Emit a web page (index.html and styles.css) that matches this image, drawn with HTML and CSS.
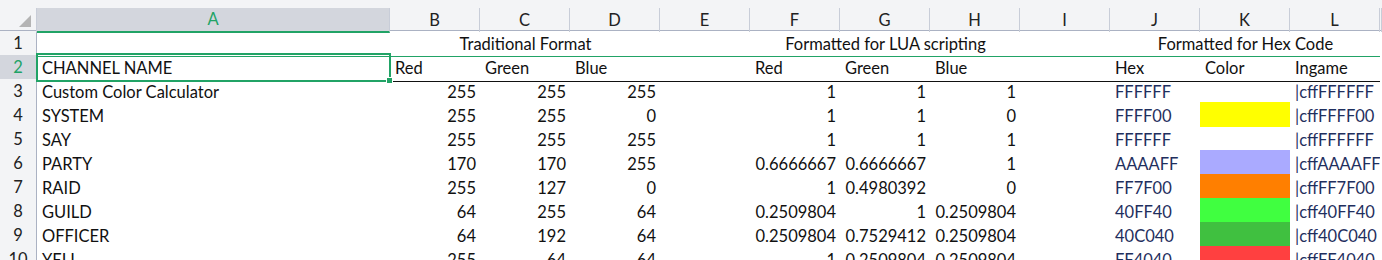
FILE: index.html
```html
<!DOCTYPE html>
<html lang="en">
<head>
    <meta charset="UTF-8">
    <title>Chat Colors</title>
    <link rel="stylesheet" href="styles.css">
</head>
<body>
    <div class="sheet">
        <div class="top-strip"></div>

        <!-- column headers -->
        <div class="grid head-row">
            <div class="hd corner"><span class="select-all"></span></div>
            <div class="hd active">A</div>
            <div class="hd">B</div>
            <div class="hd">C</div>
            <div class="hd">D</div>
            <div class="hd">E</div>
            <div class="hd">F</div>
            <div class="hd">G</div>
            <div class="hd">H</div>
            <div class="hd">I</div>
            <div class="hd">J</div>
            <div class="hd">K</div>
            <div class="hd">L</div>
            <div class="hd"></div>
        </div>

        <!-- row 1 -->
        <div class="grid row r-top">
            <div class="rh">1</div>
            <div class="c"></div>
            <div class="c span3 center">Traditional Format</div>
            <div class="c"></div>
            <div class="c span3 center">Formatted for LUA scripting</div>
            <div class="c"></div>
            <div class="c span3 center">Formatted for Hex Code</div>
            <div class="c"></div>
        </div>

        <!-- row 2 -->
        <div class="grid row r-labels">
            <div class="rh active">2</div>
            <div class="c selected">CHANNEL NAME</div>
            <div class="c">Red</div>
            <div class="c">Green</div>
            <div class="c">Blue</div>
            <div class="c"></div>
            <div class="c">Red</div>
            <div class="c">Green</div>
            <div class="c">Blue</div>
            <div class="c"></div>
            <div class="c">Hex</div>
            <div class="c">Color</div>
            <div class="c">Ingame</div>
            <div class="c"></div>
        </div>

        <div class="grid row">
            <div class="rh">3</div>
            <div class="c">Custom Color Calculator</div>
            <div class="c num">255</div><div class="c num">255</div><div class="c num">255</div>
            <div class="c"></div>
            <div class="c num">1</div><div class="c num">1</div><div class="c num">1</div>
            <div class="c"></div>
            <div class="c hex">FFFFFF</div>
            <div class="c"></div>
            <div class="c code">|cffFFFFFF</div>
            <div class="c"></div>
        </div>

        <div class="grid row">
            <div class="rh">4</div>
            <div class="c">SYSTEM</div>
            <div class="c num">255</div><div class="c num">255</div><div class="c num">0</div>
            <div class="c"></div>
            <div class="c num">1</div><div class="c num">1</div><div class="c num">0</div>
            <div class="c"></div>
            <div class="c hex">FFFF00</div>
            <div class="c swatch" style="background: #ffff00"></div>
            <div class="c code">|cffFFFF00</div>
            <div class="c"></div>
        </div>

        <div class="grid row">
            <div class="rh">5</div>
            <div class="c">SAY</div>
            <div class="c num">255</div><div class="c num">255</div><div class="c num">255</div>
            <div class="c"></div>
            <div class="c num">1</div><div class="c num">1</div><div class="c num">1</div>
            <div class="c"></div>
            <div class="c hex">FFFFFF</div>
            <div class="c"></div>
            <div class="c code">|cffFFFFFF</div>
            <div class="c"></div>
        </div>

        <div class="grid row">
            <div class="rh">6</div>
            <div class="c">PARTY</div>
            <div class="c num">170</div><div class="c num">170</div><div class="c num">255</div>
            <div class="c"></div>
            <div class="c num">0.6666667</div><div class="c num">0.6666667</div><div class="c num">1</div>
            <div class="c"></div>
            <div class="c hex">AAAAFF</div>
            <div class="c swatch" style="background: #aaaaff"></div>
            <div class="c code">|cffAAAAFF</div>
            <div class="c"></div>
        </div>

        <div class="grid row">
            <div class="rh">7</div>
            <div class="c">RAID</div>
            <div class="c num">255</div><div class="c num">127</div><div class="c num">0</div>
            <div class="c"></div>
            <div class="c num">1</div><div class="c num">0.4980392</div><div class="c num">0</div>
            <div class="c"></div>
            <div class="c hex">FF7F00</div>
            <div class="c swatch" style="background: #ff7f00"></div>
            <div class="c code">|cffFF7F00</div>
            <div class="c"></div>
        </div>

        <div class="grid row">
            <div class="rh">8</div>
            <div class="c">GUILD</div>
            <div class="c num">64</div><div class="c num">255</div><div class="c num">64</div>
            <div class="c"></div>
            <div class="c num">0.2509804</div><div class="c num">1</div><div class="c num">0.2509804</div>
            <div class="c"></div>
            <div class="c hex">40FF40</div>
            <div class="c swatch" style="background: #40ff40"></div>
            <div class="c code">|cff40FF40</div>
            <div class="c"></div>
        </div>

        <div class="grid row">
            <div class="rh">9</div>
            <div class="c">OFFICER</div>
            <div class="c num">64</div><div class="c num">192</div><div class="c num">64</div>
            <div class="c"></div>
            <div class="c num">0.2509804</div><div class="c num">0.7529412</div><div class="c num">0.2509804</div>
            <div class="c"></div>
            <div class="c hex">40C040</div>
            <div class="c swatch" style="background: #40c040"></div>
            <div class="c code">|cff40C040</div>
            <div class="c"></div>
        </div>

        <div class="grid row">
            <div class="rh">10</div>
            <div class="c">YELL</div>
            <div class="c num">255</div><div class="c num">64</div><div class="c num">64</div>
            <div class="c"></div>
            <div class="c num">1</div><div class="c num">0.2509804</div><div class="c num">0.2509804</div>
            <div class="c"></div>
            <div class="c hex">FF4040</div>
            <div class="c swatch" style="background: #ff4040"></div>
            <div class="c code">|cffFF4040</div>
            <div class="c"></div>
        </div>
    </div>
</body>
</html>
```

FILE: styles.css
```css
html, body {
    margin: 0;
    padding: 0;
    height: 260px;
    overflow: hidden;
    background: #ffffff;
}

body {
    font-family: 'Lato', 'Liberation Sans', sans-serif;
    font-size: 16.5px;
    color: #111;
}

.sheet {
    width: 1382px;
}

.top-strip {
    height: 7px;
    background: #f3f4f6;
}

.grid {
    display: grid;
    grid-template-columns: 37px 353px repeat(11, 90px) 1fr;
}

/* column headers */
.head-row {
    height: 24px;
    background: #f3f4f6;
    border-bottom: 1px solid #abb2c3;
    box-sizing: border-box;
}

.hd {
    box-sizing: border-box;
    border-right: 1px solid #c8cdd8;
    margin-top: 1px;
    text-align: center;
    line-height: 24px;
    color: #222;
}

.hd.corner {
    position: relative;
}

.select-all {
    position: absolute;
    right: 5px;
    bottom: 5px;
    width: 0;
    height: 0;
    border-left: 12px solid transparent;
    border-bottom: 12px solid #b4b4b4;
}

.hd.active {
    background: #d3d6dd;
    color: #21a366;
    border-bottom: 2px solid #21a366;
    margin-bottom: -1px;
    line-height: 23px;
}

/* body rows */
.row {
    height: 24px;
}

.rh {
    box-sizing: border-box;
    background: #f3f4f6;
    border-right: 1px solid #abb2c3;
    border-bottom: 1px solid #c8cdd8;
    text-align: center;
    line-height: 25px;
    color: #222;
}

.rh.active {
    background: #d3d6dd;
    color: #21a366;
}

.c {
    box-sizing: border-box;
    padding: 0 4px 0 5px;
    line-height: 26px;
    white-space: nowrap;
    overflow: hidden;
}

.span3 {
    grid-column: span 3;
}

.center {
    text-align: center;
}

.num {
    text-align: right;
}

.hex,
.code {
    color: #1f2f5e;
}

.row .c:first-of-type {
    padding-left: 4px;
}

/* row 1 has a green bottom rule, row 2 a black one */
.r-top .rh,
.r-top .c {
    border-bottom: 1px solid #21a366;
}

.r-labels .c {
    border-bottom: 1px solid #111;
}

.r-labels .c:last-child,
.r-top .c:last-child {
    border-bottom: none;
}

.swatch {
    margin-top: -1px;
    height: 25px;
}

/* active cell A2 */
.selected {
    position: relative;
    overflow: visible;
}

.selected::after {
    content: "";
    position: absolute;
    left: -1px;
    top: -2px;
    right: -1px;
    bottom: -1px;
    border: 2px solid #21a366;
}

.selected::before {
    content: "";
    position: absolute;
    right: -3px;
    bottom: -3px;
    width: 5px;
    height: 5px;
    background: #21a366;
    border: 1px solid #ffffff;
    z-index: 1;
}
```
